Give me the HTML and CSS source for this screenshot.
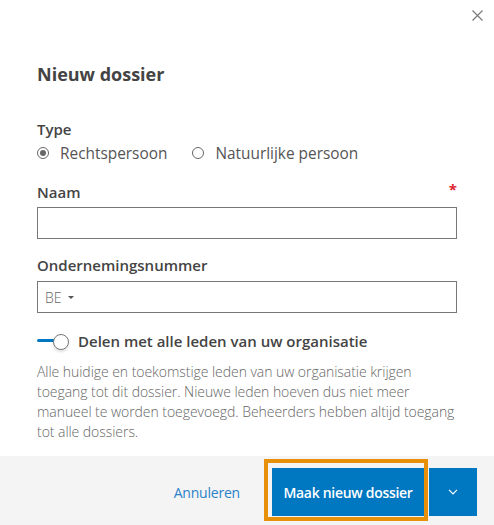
FILE: index.html
```html
<!DOCTYPE html>
<html lang="nl">
<head>
<meta charset="utf-8">
<title>Nieuw dossier</title>
<link rel="stylesheet" href="styles.css">
</head>
<body>
<div class="modal">
  <div class="topbar">
    <button class="close" aria-label="Sluiten">
      <svg width="11" height="11" viewBox="0 0 11 11"><path d="M0.5 0.5 L10.5 10.5 M10.5 0.5 L0.5 10.5" stroke="#7a7a7a" stroke-width="1.2" fill="none"/></svg>
    </button>
  </div>
  <div class="content">
    <h1 class="title">Nieuw dossier</h1>

    <div class="field-type">
      <div class="label">Type</div>
      <div class="radios">
        <label class="radio"><span class="dot checked"></span>Rechtspersoon</label>
        <label class="radio"><span class="dot"></span>Natuurlijke persoon</label>
      </div>
    </div>

    <div class="field field-naam">
      <div class="label-row"><span class="label">Naam</span><span class="req">*</span></div>
      <div class="input"></div>
    </div>

    <div class="field field-ondern">
      <div class="label-row"><span class="label">Ondernemingsnummer</span></div>
      <div class="input"><span class="prefix">BE</span><span class="caret"></span></div>
    </div>

    <div class="toggle-row">
      <span class="toggle"><span class="track"></span><span class="knob"></span></span>
      <span class="toggle-label">Delen met alle leden van uw organisatie</span>
    </div>

    <p class="help">Alle huidige en toekomstige leden van uw organisatie krijgen<br>toegang tot dit dossier. Nieuwe leden hoeven dus niet meer<br>manueel te worden toegevoegd. Beheerders hebben altijd toegang<br>tot alle dossiers.</p>
  </div>
  <div class="footer">
    <button class="link-btn">Annuleren</button>
    <button class="primary focus">Maak nieuw dossier</button>
    <button class="primary split" aria-label="Meer opties">
      <svg width="10" height="6" viewBox="0 0 10 6"><path d="M1 0.8 L5 4.8 L9 0.8" stroke="#fff" stroke-width="1.2" fill="none"/></svg>
    </button>
  </div>
</div>
</body>
</html>
```

FILE: styles.css
```css
* { box-sizing: border-box; }
html, body { margin: 0; padding: 0; background: #fff; }
body {
  font-family: "Open Sans", "Noto Sans", sans-serif;
  color: #444;
  width: 494px;
  height: 525px;
  overflow: hidden;
}
.modal { display: flex; flex-direction: column; height: 525px; }
.topbar { display: flex; justify-content: flex-end; padding: 10px 11px 0 0; height: 62px; }
.close { border: 0; background: none; padding: 0; width: 11px; height: 11px; display: block; }
.close svg { display: block; }
.content { padding: 0 37px; flex: 1; }
.title { margin: 0; font-size: 18px; line-height: 24px; font-weight: 700; color: #444; }
.field-type { margin-top: 33px; }
.label { font-size: 15px; line-height: 20px; font-weight: 600; color: #444; }
.radios { display: flex; gap: 25px; height: 22px; align-items: center; margin-top: 3px; }
.radio { display: flex; align-items: center; gap: 11px; font-size: 15.4px; color: #555; }
.dot { width: 12px; height: 12px; border: 1px solid #666; border-radius: 50%; display: inline-flex; align-items: center; justify-content: center; }
.dot.checked::after { content: ""; width: 6px; height: 6px; border-radius: 50%; background: #666; }
.field { margin-top: 18px; }
.field-ondern { margin-top: 16px; }
.label-row { display: flex; justify-content: space-between; align-items: flex-start; height: 20px; }
.req { color: #e0232e; font-size: 15px; line-height: 14px; font-weight: 700; }
.input { margin-top: 5px; height: 32px; border: 1px solid #777; display: flex; align-items: center; padding-left: 7px; }
.field-ondern .input { margin-top: 6px; }
.prefix { font-size: 14px; font-weight: 300; color: #666; }
.caret { width: 0; height: 0; border-left: 3px solid transparent; border-right: 3px solid transparent; border-top: 3px solid #555; margin-left: 6px; }
.toggle-row { display: flex; align-items: center; margin-top: 18px; height: 20px; }
.toggle { position: relative; width: 32px; height: 20px; flex: none; margin-right: 9px; }
.track { position: absolute; left: 0; top: 8px; width: 20px; height: 3px; background: #0077c1; border-radius: 2px; }
.knob { position: absolute; left: 16px; top: 3px; width: 16px; height: 16px; border-radius: 50%; background: #fff; border: 1px solid #777; box-shadow: 0 2px 3px rgba(0,0,0,0.12); }
.toggle-label { font-size: 15px; font-weight: 600; color: #444; }
.help { margin: 11px 0 0; font-size: 14px; line-height: 20px; font-weight: 300; color: #666; letter-spacing: -0.05px; white-space: nowrap; }
.footer { background: #f4f4f4; height: 69px; display: flex; justify-content: flex-end; align-items: flex-start; padding: 12px 17px 0 0; }
.link-btn { border: 0; background: none; font-family: inherit; font-size: 14px; letter-spacing: -0.2px; color: #2b82c9; height: 48px; padding: 0; margin-right: 32px; }
.primary { border: 0; background: #0077c1; color: #fff; font-family: inherit; font-size: 14px; letter-spacing: -0.3px; font-weight: 600; height: 48px; }
.primary.focus { position: relative; width: 152px; padding: 0; }
.primary.focus::after { content: ""; position: absolute; top: -9px; left: -8px; right: -4px; bottom: -5px; border: 4px solid #e8900a; }
.split { width: 48px; margin-left: 5px; display: flex; align-items: center; justify-content: center; padding: 0; }
.split svg { display: block; }
```
